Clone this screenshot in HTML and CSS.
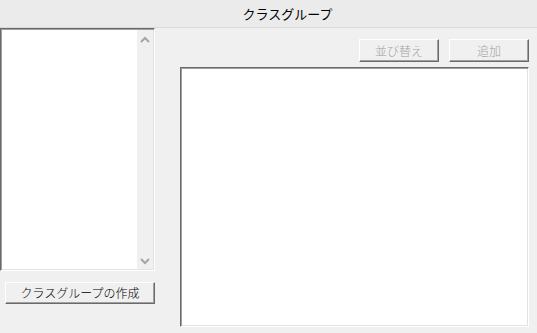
FILE: index.html
```html
<!DOCTYPE html>
<html lang="ja">
<head>
  <meta charset="UTF-8">
  <title>クラスグループ</title>
  <link rel="stylesheet" href="styles.css">
</head>
<body>
  <div class="title-bar">クラスグループ</div>

  <div class="main">
    <div class="left-col">
      <div class="listbox">
        <div class="list-items"></div>
        <div class="scrollbar">
          <svg width="16" height="16" viewBox="0 0 16 16"><path d="M4 10 L8 6 L12 10" fill="none" stroke="#a6a6a6" stroke-width="2"/></svg>
          <svg width="16" height="16" viewBox="0 0 16 16"><path d="M4 6 L8 10 L12 6" fill="none" stroke="#a6a6a6" stroke-width="2"/></svg>
        </div>
      </div>
      <button class="btn">クラスグループの作成</button>
    </div>

    <div class="right-col">
      <div class="toolbar">
        <button class="btn btn-small" disabled>並び替え</button>
        <button class="btn btn-small" disabled>追加</button>
      </div>
      <div class="editbox"></div>
    </div>
  </div>
</body>
</html>
```

FILE: styles.css
```css
body {
  margin: 0;
  background: #f0f0f0;
  font-family: "Noto Sans CJK JP", "Noto Sans", sans-serif;
  font-size: 12px;
  color: #000;
  width: 537px;
  height: 333px;
  overflow: hidden;
}

.title-bar {
  height: 27px;
  line-height: 27px;
  background: #ebebeb;
  border-bottom: 1px solid #dadada;
  text-align: center;
  font-size: 13px;
  padding-left: 38px;
}

.main {
  display: flex;
}

.left-col {
  width: 155px;
  display: flex;
  flex-direction: column;
}

.listbox {
  height: 243px;
  box-sizing: border-box;
  display: flex;
  background: #fff;
  border-top: 1px solid #6a6a6a;
  border-left: 1px solid #6a6a6a;
  border-right: 1px solid #fff;
  border-bottom: 1px solid #fff;
  box-shadow: inset 1px 1px 0 #a0a0a0, inset -1px -1px 0 #e3e3e3;
}

.list-items {
  flex: 1;
}

.scrollbar {
  width: 16px;
  margin: 1px 1px 1px 0;
  background: #f0f0f0;
  display: flex;
  flex-direction: column;
  justify-content: space-between;
  padding: 2px 0 0;
}

.btn {
  font-family: inherit;
  font-size: 12px;
  font-weight: 300;
  background: #f0f0f0;
  color: #000;
  border-top: 1px solid #fff;
  border-left: 1px solid #fff;
  border-right: 1px solid #6a6a6a;
  border-bottom: 1px solid #6a6a6a;
  box-shadow: inset -1px -1px 0 #a0a0a0;
  padding: 0;
  height: 22px;
  line-height: 18px;
  margin: 11px 0 0 5px;
  width: 150px;
}

.btn:disabled {
  color: #a0a0a0;
}

.right-col {
  flex: 1;
  padding: 11px 8px 0 25px;
  display: flex;
  flex-direction: column;
}

.toolbar {
  display: flex;
  justify-content: flex-end;
  gap: 10px;
}

.btn-small {
  width: 80px;
  height: 23px;
  margin: 0;
}

.editbox {
  margin-top: 5px;
  height: 260px;
  box-sizing: border-box;
  background: #fff;
  border-top: 1px solid #6a6a6a;
  border-left: 1px solid #6a6a6a;
  border-right: 1px solid #fff;
  border-bottom: 1px solid #fff;
  box-shadow: inset 1px 1px 0 #a0a0a0, inset -1px -1px 0 #e3e3e3;
}
```
